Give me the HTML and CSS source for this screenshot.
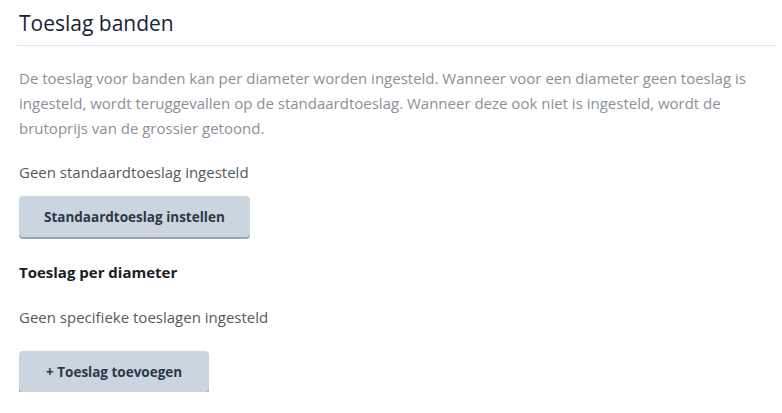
FILE: index.html
```html
<!DOCTYPE html>
<html>
<head>
    <title>Toeslag banden</title>
    <link rel="stylesheet" href="styles.css">
</head>
<body>

<div class="panel">
    <h2 class="panel-title">Toeslag banden</h2>

    <p class="info-text">
        De toeslag voor banden kan per diameter worden ingesteld. Wanneer voor een diameter geen toeslag is ingesteld, wordt teruggevallen op de standaardtoeslag. Wanneer deze ook niet is ingesteld, wordt de brutoprijs van de grossier getoond.
    </p>

    <p class="status-text">Geen standaardtoeslag ingesteld</p>
    <button type="button" class="btn">Standaardtoeslag instellen</button>

    <h3 class="sub-title">Toeslag per diameter</h3>

    <p class="status-text status-text--wide">Geen specifieke toeslagen ingesteld</p>
    <button type="button" class="btn btn--wide">+ Toeslag toevoegen</button>
</div>

</body>
</html>
```

FILE: styles.css
```css
body {
    margin: 0;
    background-color: #ffffff;
    font-family: "Open Sans", "Liberation Sans", sans-serif;
}

.panel {
    margin: 0 6px 0 17px;
    padding-top: 10px;
}

.panel-title {
    font-size: 21px;
    font-weight: 400;
    color: #1a2238;
    margin: 0;
    padding: 0 2px 9px;
    line-height: 26px;
    border-bottom: 1px solid #e2e6ea;
}

.info-text {
    font-size: 15px;
    line-height: 25px;
    color: #8c9097;
    margin: 20px 0 0;
    padding-left: 2px;
}

.status-text {
    font-size: 15px;
    line-height: 20px;
    color: #555a60;
    margin: 21px 0 0;
    padding-left: 2px;
}

.status-text--wide {
    margin-top: 25px;
}

.btn {
    display: block;
    font-family: inherit;
    font-size: 13.5px;
    font-weight: 700;
    color: #2d3748;
    background-color: #cbd5e0;
    border: 0;
    border-radius: 4px;
    box-shadow: 0 2px 0 #9aa5b1;
    padding: 0 25px;
    height: 41px;
    margin: 14px 0 0 2px;
    cursor: pointer;
}

.btn--wide {
    margin-top: 24px;
    padding: 0 27px;
}

.sub-title {
    font-size: 15px;
    font-weight: 700;
    color: #1a1d24;
    margin: 25px 0 0;
    padding-left: 2px;
    line-height: 20px;
}
```
